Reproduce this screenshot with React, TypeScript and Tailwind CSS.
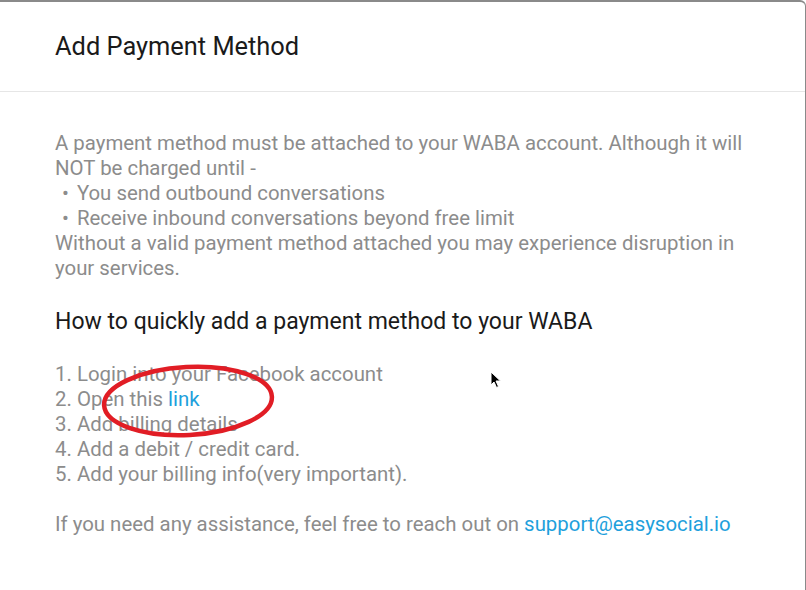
const steps = [
  { n: 1, text: "Login into your Facebook account" },
  { n: 2, text: "Open this ", link: "link" },
  { n: 3, text: "Add billing details" },
  { n: 4, text: "Add a debit / credit card." },
  { n: 5, text: "Add your billing info(very important)." },
];

export default function App() {
  return (
    <div className="relative h-[590px] w-[806px] overflow-hidden bg-white font-['Roboto',sans-serif]">
      <div className="flex h-full flex-col rounded-tr-md border-t-2 border-r border-[#8a8a8a]">
        <div className="flex h-[90px] items-center border-b border-[#e6e6e6] px-[55px] pb-[1px]">
          <h1 className="text-[25.4px] text-[#1a1a1a]">Add Payment Method</h1>
        </div>

        <div className="px-[55px] pt-[39px] text-[20.4px] leading-[25px] text-[#8c8c8c]">
          <p className="w-[705px]">
            A payment method must be attached to your WABA account. Although it
            will NOT be charged until -
          </p>
          <ul className="pl-[7px]">
            <li className="flex gap-[8px]">
              <span>•</span>You send outbound conversations
            </li>
            <li className="flex gap-[8px]">
              <span>•</span>Receive inbound conversations beyond free limit
            </li>
          </ul>
          <p className="w-[705px]">
            Without a valid payment method attached you may experience
            disruption in your services.
          </p>

          <h2 className="mt-[16px] text-[23px] leading-[50px] text-[#1a1a1a]">
            How to quickly add a payment method to your WABA
          </h2>

          <ol className="mt-[15px]">
            {steps.map((step) => (
              <li key={step.n}>
                {step.n}. {step.text}
                {step.link && <span className="text-[#1ea0dc]">{step.link}</span>}
              </li>
            ))}
          </ol>

          <p className="mt-[25px]">
            If you need any assistance, feel free to reach out on{" "}
            <span className="text-[#1ea0dc]">support@easysocial.io</span>
          </p>
        </div>
      </div>

      {/* red annotation */}
      <svg className="absolute left-[98px] top-[361px]" width="182" height="82" viewBox="0 0 182 82">
        <ellipse cx="90" cy="40" rx="84" ry="34" fill="none" stroke="#e11d25" strokeWidth="4.5" transform="rotate(-3 90 40)" />
      </svg>

      {/* mouse pointer */}
      <svg className="absolute left-[490px] top-[371px]" width="12" height="18" viewBox="0 0 12 18">
        <path d="M1 1 L1 14 L4 11 L6.5 16.5 L8.5 15.5 L6 10 L10.5 10 Z" fill="#000" stroke="#fff" strokeWidth="1" />
      </svg>
    </div>
  );
}
